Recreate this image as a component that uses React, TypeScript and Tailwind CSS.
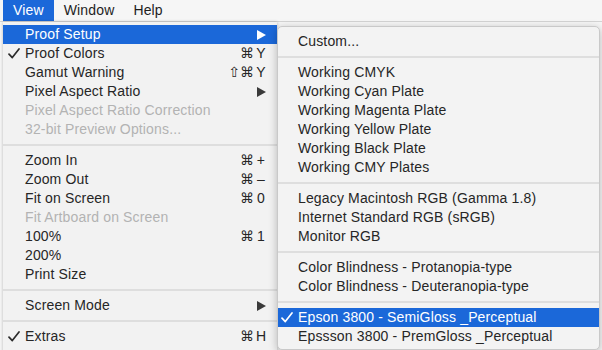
import React from 'react';

type Item =
  | { sep: true }
  | {
      sep?: false;
      label: string;
      checked?: boolean;
      disabled?: boolean;
      active?: boolean;
      submenu?: boolean;
      mods?: string;
      keyName?: string;
    };

const viewItems: Item[] = [
  { label: 'Proof Setup', submenu: true, active: true },
  { label: 'Proof Colors', checked: true, mods: '⌘', keyName: 'Y' },
  { label: 'Gamut Warning', mods: '⇧⌘', keyName: 'Y' },
  { label: 'Pixel Aspect Ratio', submenu: true },
  { label: 'Pixel Aspect Ratio Correction', disabled: true },
  { label: '32-bit Preview Options...', disabled: true },
  { sep: true },
  { label: 'Zoom In', mods: '⌘', keyName: '+' },
  { label: 'Zoom Out', mods: '⌘', keyName: '–' },
  { label: 'Fit on Screen', mods: '⌘', keyName: '0' },
  { label: 'Fit Artboard on Screen', disabled: true },
  { label: '100%', mods: '⌘', keyName: '1' },
  { label: '200%' },
  { label: 'Print Size' },
  { sep: true },
  { label: 'Screen Mode', submenu: true },
  { sep: true },
  { label: 'Extras', checked: true, mods: '⌘', keyName: 'H' },
];

const proofItems: Item[] = [
  { label: 'Custom...' },
  { sep: true },
  { label: 'Working CMYK' },
  { label: 'Working Cyan Plate' },
  { label: 'Working Magenta Plate' },
  { label: 'Working Yellow Plate' },
  { label: 'Working Black Plate' },
  { label: 'Working CMY Plates' },
  { sep: true },
  { label: 'Legacy Macintosh RGB (Gamma 1.8)' },
  { label: 'Internet Standard RGB (sRGB)' },
  { label: 'Monitor RGB' },
  { sep: true },
  { label: 'Color Blindness - Protanopia-type' },
  { label: 'Color Blindness - Deuteranopia-type' },
  { sep: true },
  { label: 'Epson 3800 - SemiGloss _Perceptual', checked: true, active: true },
  { label: 'Epssson 3800 - PremGloss _Perceptual' },
];

const Check = ({ white }: { white?: boolean }) => (
  <svg width="12" height="11" viewBox="0 0 12 11" className="shrink-0">
    <path
      d="M1 6.2 L4.3 9.6 L11 1"
      fill="none"
      stroke={white ? '#ffffff' : '#2b2b2b'}
      strokeWidth="1.7"
      strokeLinecap="round"
      strokeLinejoin="round"
    />
  </svg>
);

const Arrow = ({ white }: { white?: boolean }) => (
  <svg width="9" height="10" viewBox="0 0 9 10">
    <polygon points="0,0 9,5 0,10" fill={white ? '#ffffff' : '#3a3a3a'} />
  </svg>
);

const MenuList = ({ items, indent }: { items: Item[]; indent: string }) => (
  <>
    {items.map((it, i) => {
      if (it.sep) {
        return (
          <div key={i} className="h-[12px] flex items-center">
            <div className="h-[2px] w-full bg-[#dedede]" />
          </div>
        );
      }
      const text = it.active ? 'text-white' : it.disabled ? 'text-[#b3b3b3]' : 'text-[#262626]';
      return (
        <div
          key={i}
          className={`h-[19px] flex items-center pr-[11px] ${it.active ? 'bg-[#1b68d9]' : ''} ${text}`}
        >
          <div className={`${indent} shrink-0 flex justify-end pr-[5px]`}>
            {it.checked && <Check white={it.active} />}
          </div>
          <span className="flex-1 whitespace-nowrap">{it.label}</span>
          {it.submenu && <Arrow white={it.active} />}
          {it.keyName && (
            <span className="flex items-center gap-[2px]">
              <span className="font-['DejaVu_Sans',sans-serif] text-[14px] tracking-normal">{it.mods}</span>
              <span className="w-[10px] text-center">{it.keyName}</span>
            </span>
          )}
        </div>
      );
    })}
  </>
);

export default function App() {
  return (
    <div className="w-[602px] h-[350px] overflow-hidden relative bg-[#f6f6f6] font-['Liberation_Sans',Arial,sans-serif] text-[14px] tracking-[0.15px]">
      {/* menu bar */}
      <div className="h-[22px] flex items-stretch bg-[#f6f6f6] border-b border-[#d4d4d4] text-[#1e1e1e]">
        <div className="ml-[3px] px-[10px] bg-[#1b68d9] text-white flex items-center">View</div>
        <div className="px-[10px] flex items-center">Window</div>
        <div className="px-[9px] flex items-center">Help</div>
      </div>

      {/* View menu */}
      <div className="absolute left-[3px] top-[22px] w-[274px] h-[340px] bg-[#f2f2f2] pt-[3px] shadow-[0_0_3px_rgba(0,0,0,0.25)]">
        <MenuList items={viewItems} indent="w-[22px]" />
      </div>

      {/* Proof Setup submenu */}
      <div className="absolute left-[277px] top-[26px] w-[323px] bg-[#f3f3f3] pt-[5px] pb-[3px] rounded-[5px] border border-[#c9c9c9] shadow-[0_2px_8px_rgba(0,0,0,0.25)] overflow-hidden">
        <MenuList items={proofItems} indent="w-[20px]" />
      </div>
    </div>
  );
}
